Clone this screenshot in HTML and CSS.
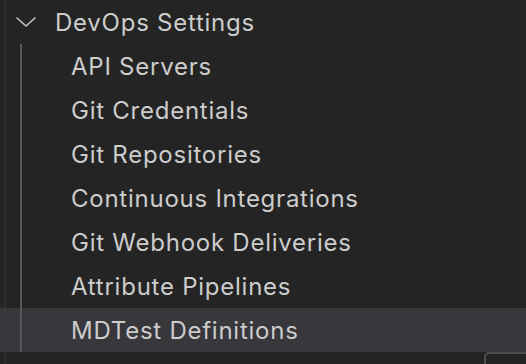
FILE: index.html
```html
<!DOCTYPE html>
<html>
<head>
<meta charset="utf-8">
<link rel="stylesheet" href="styles.css">
</head>
<body>
<div class="tree">
  <div class="edge"></div>
  <div class="row header">
    <svg class="chevron" width="20" height="10" viewBox="0 0 20 10"><path d="M1 1 L10 9 L19 1" fill="none" stroke="#c5c5c5" stroke-width="1.6" stroke-linecap="round" stroke-linejoin="round"/></svg>
    <span class="label">DevOps Settings</span>
  </div>
  <div class="children">
    <div class="row item"><span class="label">API Servers</span></div>
    <div class="row item"><span class="label">Git Credentials</span></div>
    <div class="row item"><span class="label">Git Repositories</span></div>
    <div class="row item"><span class="label">Continuous Integrations</span></div>
    <div class="row item"><span class="label">Git Webhook Deliveries</span></div>
    <div class="row item"><span class="label">Attribute Pipelines</span></div>
    <div class="row item selected"><span class="label">MDTest Definitions</span></div>
  </div>
  <div class="corner-box"></div>
</div>
</body>
</html>
```
FILE: styles.css
```css
html, body {
  margin: 0;
  padding: 0;
  background: #242424;
  width: 526px;
  height: 364px;
  overflow: hidden;
}
.tree {
  position: relative;
  height: 364px;
  overflow: hidden;
  font-family: Inter, "Noto Sans", sans-serif;
  font-size: 24px;
  letter-spacing: 0.75px;
  color: #cccccc;
}
.edge {
  position: absolute;
  left: 4px;
  top: 0;
  bottom: 0;
  width: 2px;
  background: #2e2e2e;
}
.row {
  height: 44px;
  display: flex;
  align-items: center;
}
.header {
  padding-left: 16px;
}
.chevron {
  display: block;
  margin-right: 19px;
}
.children {
  position: relative;
}
.children::before {
  content: "";
  position: absolute;
  left: 20px;
  top: 0;
  bottom: 0;
  width: 2px;
  background: #585858;
  z-index: 2;
}
.item {
  padding-left: 71px;
}
.selected {
  background: #37373c;
}
.label {
  white-space: nowrap;
}
.corner-box {
  position: absolute;
  left: 484px;
  top: 352px;
  width: 60px;
  height: 40px;
  border: 2px solid #4e4e4e;
  border-radius: 5px;
}
```
